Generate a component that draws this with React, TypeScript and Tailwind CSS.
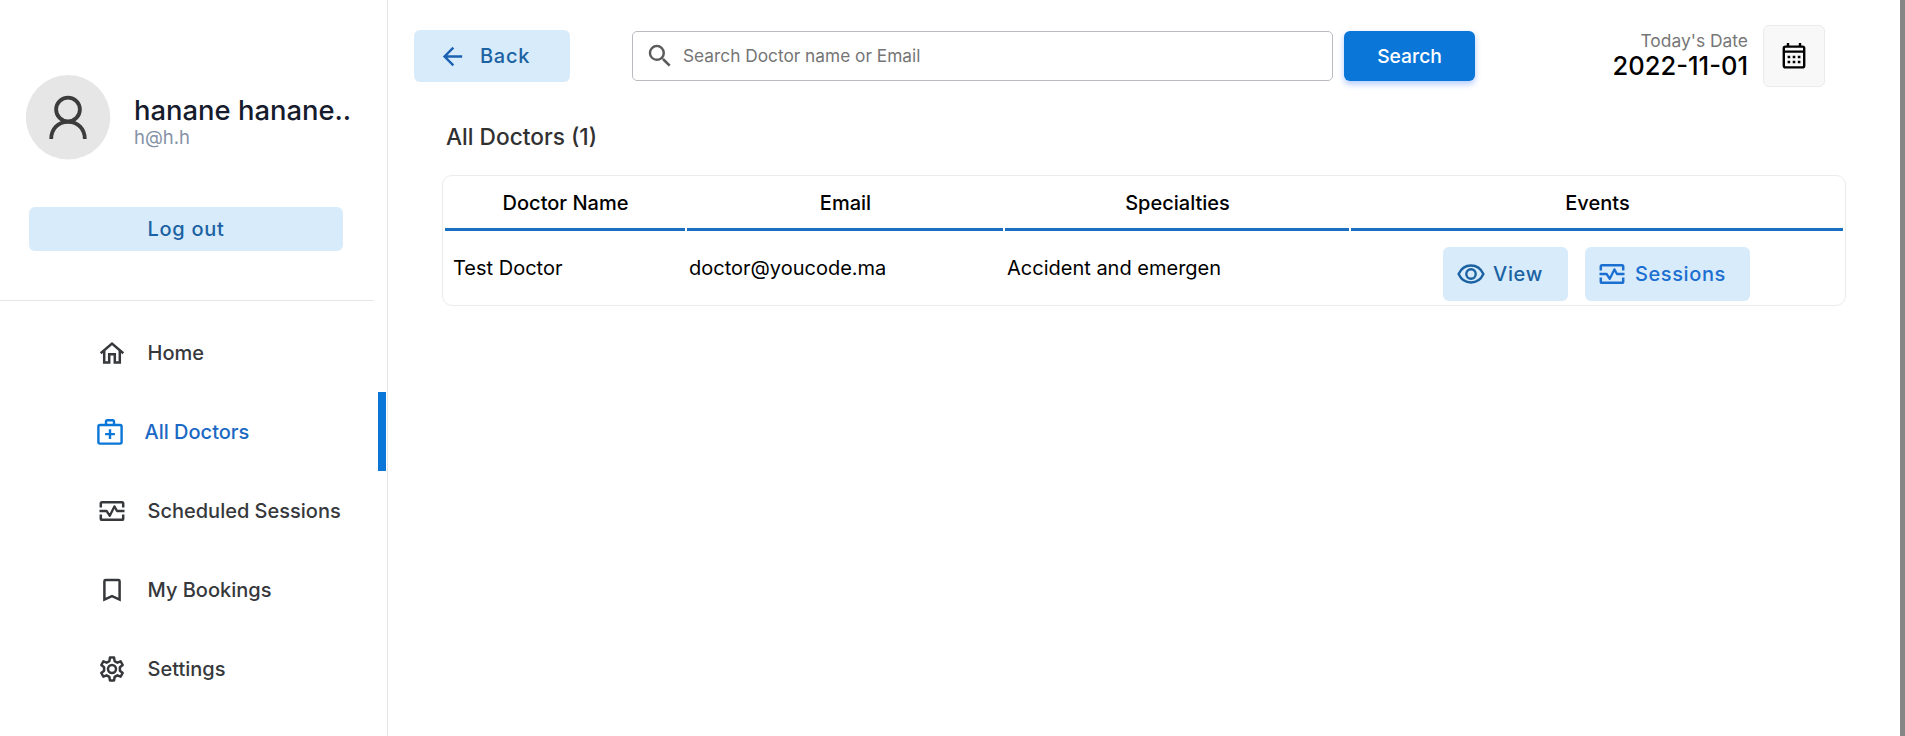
import type { ReactNode } from "react";
import { MdSearch, MdArrowBack } from "react-icons/md";

function AvatarIcon() {
  return (
    <svg viewBox="0 0 85 85" className="size-[85px] shrink-0" fill="none" stroke="#3c3c3c" strokeWidth="3.8">
      <circle cx="42.1" cy="42.3" r="42.2" fill="#e6e6e6" stroke="none" />
      <circle cx="42" cy="34.5" r="11.9" />
      <path d="M25.2 64C25.2 54 32 46.8 42 46.8S58.8 54 58.8 64" />
    </svg>
  );
}

function HomeIcon() {
  return (
    <svg viewBox="0 0 26 26" className="size-[26px] shrink-0" fill="none" stroke="currentColor" strokeWidth="2.5">
      <path d="M1.7 13.2L13 3.6L24.3 13.2" />
      <path d="M5.2 11V22.4H10.2V14.2H15.8V22.4H20.8V11" />
    </svg>
  );
}

function MedicalBoxIcon() {
  return (
    <svg viewBox="0 0 26 26" className="size-[26px] shrink-0" fill="none" stroke="currentColor" strokeWidth="2.4">
      <rect x="1.4" y="6" width="23.2" height="18.6" rx="1.6" />
      <path d="M9 6V2.8Q9 1.3 10.4 1.3H15.6Q17 1.3 17 2.8V6M13 10.2V20M8.1 15.1H17.9" />
    </svg>
  );
}

function SessionIcon() {
  return (
    <svg viewBox="0 0 26 20" className="h-5 w-[26px] shrink-0" fill="none" stroke="currentColor" strokeWidth="2.5" strokeLinejoin="round">
      <path d="M1.8 6.6V2.6Q1.8 1.3 3 1.3H23Q24.2 1.3 24.2 2.6V6.6M1.8 13.6V17.4Q1.8 18.7 3 18.7H23Q24.2 18.7 24.2 17.4V13.6" />
      <path d="M0.5 10H7.6L10.8 14.8L15.4 5.4L18 10H25.5" strokeWidth="2.3" />
    </svg>
  );
}

function BookmarkIcon() {
  return (
    <svg viewBox="0 0 26 26" className="size-[26px] shrink-0" fill="none" stroke="currentColor" strokeWidth="2.5">
      <path d="M5.4 22.6V4.2Q5.4 3 6.6 3H19.4Q20.6 3 20.6 4.2V22.6L13 19.2Z" />
    </svg>
  );
}

function GearIcon() {
  return (
    <svg viewBox="0 0 26 26" className="size-[26px] shrink-0" fill="none" stroke="currentColor" strokeWidth="2.5" strokeLinejoin="round">
      <circle cx="13" cy="13" r="4" />
      <path d="M10.9 1.6H15.1L15.6 5.1L18.4 6.7L21.6 5.3L23.7 9L20.9 11.2V14.8L23.7 17L21.6 20.7L18.4 19.3L15.6 20.9L15.1 24.4H10.9L10.4 20.9L7.6 19.3L4.4 20.7L2.3 17L5.1 14.8V11.2L2.3 9L4.4 5.3L7.6 6.7L10.4 5.1Z" />
    </svg>
  );
}

function EyeIcon() {
  return (
    <svg viewBox="0 0 28 20" className="h-5 w-7 shrink-0" fill="none" stroke="currentColor" strokeWidth="2.4">
      <path d="M1.6 10C4.2 4.4 8.6 1.5 14 1.5S23.8 4.4 26.4 10C23.8 15.6 19.4 18.5 14 18.5S4.2 15.6 1.6 10Z" />
      <circle cx="14" cy="10" r="4.7" />
    </svg>
  );
}

function CalendarIcon() {
  return (
    <svg viewBox="0 0 24 26" className="h-[26px] w-6" fill="none" stroke="#000" strokeWidth="2.4">
      <rect x="1.8" y="3.6" width="20.4" height="20.8" rx="1.6" />
      <path d="M1.6 8.6H22.4M6 0V4M18 0V4" />
      <path d="M5.6 14H18.6M5.6 19H18.6" strokeWidth="2.6" strokeDasharray="2.6 2.5" />
    </svg>
  );
}

function NavItem({ icon, label, active = false }: { icon: ReactNode; label: string; active?: boolean }) {
  return (
    <a
      className={
        active
          ? "flex h-[79px] items-center border-r-8 border-[#0a76d8] pl-[97px] text-[#1b69c4]"
          : "flex h-[79px] items-center pl-[99px] text-[#36383b]"
      }
    >
      <span className={active ? "flex w-[47.5px] items-center text-[#0a76d8]" : "flex w-[48.5px] items-center"}>{icon}</span>
      <span className="text-[20px] font-medium whitespace-nowrap">{label}</span>
    </a>
  );
}

const columns = ["Doctor Name", "Email", "Specialties", "Events"];

export default function App() {
  return (
    <div className="flex h-[736px] w-full overflow-hidden bg-white font-['Inter',sans-serif] text-black">
      <aside className="flex w-[388px] shrink-0 flex-col border-r border-[#e6e6e6] pr-px">
        <div className="flex h-[160px] items-center gap-[23px] pt-[75px] pl-[26px]">
          <AvatarIcon />
          <div className="pt-[6px] whitespace-nowrap">
            <p className="text-[27.4px] leading-[32px] font-medium text-[#161c2d]">hanane hanane..</p>
            <p className="text-[18.5px] leading-[22px] text-[#8492a6]">h@h.h</p>
          </div>
        </div>
        <button className="mt-[47px] ml-[29px] h-11 w-[314px] rounded-md bg-[#d8ebfa] text-[20px] font-medium tracking-[0.7px] text-[#1b62a3]">
          Log out
        </button>
        <hr className="mt-[49px] w-[374px] border-[#e6e6e6]" />
        <nav className="mt-3">
          <NavItem icon={<HomeIcon />} label="Home" />
          <NavItem icon={<MedicalBoxIcon />} label="All Doctors" active />
          <NavItem icon={<SessionIcon />} label="Scheduled Sessions" />
          <NavItem icon={<BookmarkIcon />} label="My Bookings" />
          <NavItem icon={<GearIcon />} label="Settings" />
        </nav>
      </aside>

      <main className="flex min-w-0 flex-1 flex-col">
        <header className="flex h-[112px] items-center pl-[26px]">
          <button className="flex h-[52px] w-[156px] items-center rounded-md bg-[#d8ebfa] pl-6 text-[20px] font-medium tracking-[0.7px] text-[#1b62a3]">
            <MdArrowBack size={29} className="mr-[13px]" color="#1b62b3" />
            Back
          </button>
          <label className="ml-[62px] flex h-[50px] w-[701px] items-center rounded-[5px] border border-[#b8bcc0] pl-3">
            <MdSearch size={30} color="#5b5b5b" />
            <input placeholder="Search Doctor name or Email" className="ml-2 flex-1 text-[17.3px] outline-none placeholder:text-[#757575]" />
          </label>
          <button className="ml-[11px] h-[50px] w-[131px] rounded-md bg-[#0a76d8] text-[19.3px] font-medium text-white shadow-[0_3px_6px_0_#397bff66]">
            Search
          </button>
          <div className="ml-auto pb-[3px] text-right whitespace-nowrap">
            <p className="text-[17.4px] leading-[22px] text-[#777777]">Today's Date</p>
            <p className="text-[25.5px] leading-[28px] font-medium">2022-11-01</p>
          </div>
          <div className="mr-[75px] ml-[15px] flex size-[62px] items-center justify-center rounded-md border border-[#ebebeb] bg-[#f8f8f8]">
            <CalendarIcon />
          </div>
        </header>
        <h1 className="pt-[10px] pl-[58px] text-[22.7px] leading-[30px] font-medium text-[#313131]">All Doctors (1)</h1>
        <div className="mt-[23px] ml-[54px] h-[131px] w-[1404px] rounded-[10px] border border-[#ebebeb] px-[2px]">
          <div className="grid grid-cols-[240px_316px_344px_492px] gap-[2px]">
            {columns.map((name) => (
              <div key={name} className="flex h-[55px] items-center justify-center border-b-3 border-[#1b6fc0] pt-[2px] pl-px text-[20px] font-medium">
                {name}
              </div>
            ))}
          </div>
          <div className="grid h-[74px] grid-cols-[240px_316px_344px_492px] gap-[2px] text-[20px]">
            <div className="pt-[22px] pl-[8px]">Test Doctor</div>
            <div className="pt-[22px] pl-[2px]">doctor@youcode.ma</div>
            <div className="pt-[22px] pl-[2px]">Accident and emergen</div>
            <div className="flex items-start gap-[17px] pt-4 pl-[92px]">
              <button className="flex h-[54px] w-[125px] items-center gap-2 rounded-md bg-[#d8ebfa] pl-[14px] font-medium tracking-[0.7px] text-[#1b62a3]">
                <EyeIcon />
                View
              </button>
              <button className="flex h-[54px] w-[165px] items-center gap-[10px] rounded-md bg-[#d8ebfa] pl-[14px] font-medium tracking-[0.6px] text-[#1b6fd0]">
                <SessionIcon />
                Sessions
              </button>
            </div>
          </div>
        </div>
      </main>
      <div className="w-[5px] shrink-0 bg-[#868686]" />
    </div>
  );
}
